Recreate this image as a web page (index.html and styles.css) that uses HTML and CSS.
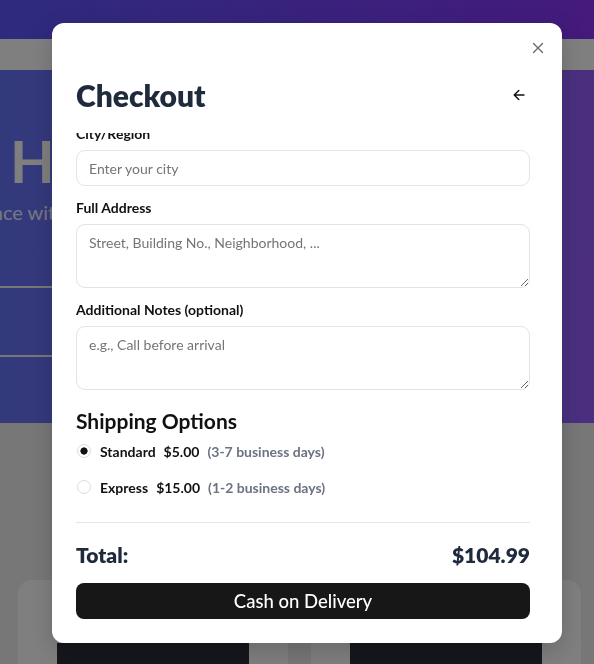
FILE: index.html
```html
<!DOCTYPE html>
<html lang="en">
<head>
<meta charset="utf-8">
<title>Checkout</title>
<link rel="stylesheet" href="styles.css">
</head>
<body>
<header class="topbar"></header>
<div class="subbar"></div>
<section class="hero">
  <h1 class="hero-title">Handmade Market</h1>
  <p class="hero-sub">experience with our store</p>
  <div class="hero-search"></div>
</section>
<section class="products">
  <div class="card"><div class="thumb"></div></div>
  <div class="card"><div class="thumb"></div></div>
</section>

<div class="overlay"></div>

<div class="modal" role="dialog" aria-label="Checkout">
  <button class="close" aria-label="Close">
    <svg width="12" height="12" viewBox="0 0 12 12"><path d="M1.5 1.5l9 9M10.5 1.5l-9 9" stroke="#6b6b6b" stroke-width="1.4" fill="none" stroke-linecap="round"/></svg>
  </button>
  <div class="modal-head">
    <h2 class="modal-title">Checkout</h2>
    <button class="back" aria-label="Back">
      <svg width="12" height="12" viewBox="0 0 12 12"><path d="M11 6H1.2M5.8 1.4L1.2 6l4.6 4.6" stroke="#111" stroke-width="1.4" fill="none" stroke-linecap="round" stroke-linejoin="round"/></svg>
    </button>
  </div>
  <div class="modal-body">
    <form class="form">
      <div class="field">
        <label class="label">City/Region</label>
        <input class="input" type="text" placeholder="Enter your city">
      </div>
      <div class="field">
        <label class="label">Full Address</label>
        <textarea class="input textarea" placeholder="Street, Building No., Neighborhood, ..."></textarea>
      </div>
      <div class="field">
        <label class="label">Additional Notes (optional)</label>
        <textarea class="input textarea" placeholder="e.g., Call before arrival"></textarea>
      </div>
      <h3 class="section-title">Shipping Options</h3>
      <div class="options">
        <label class="option">
          <input class="radio" type="radio" name="ship" checked>
          <span class="opt-name">Standard</span>
          <span class="opt-price">$5.00</span>
          <span class="opt-time">(3-7 business days)</span>
        </label>
        <label class="option">
          <input class="radio" type="radio" name="ship">
          <span class="opt-name">Express</span>
          <span class="opt-price">$15.00</span>
          <span class="opt-time">(1-2 business days)</span>
        </label>
      </div>
      <div class="summary">
        <div class="total">
          <span>Total:</span>
          <span>$104.99</span>
        </div>
        <button type="button" class="pay">Cash on Delivery</button>
      </div>
    </form>
  </div>
</div>
</body>
</html>
```

FILE: styles.css
```css
* { box-sizing: border-box; }
html, body { margin: 0; padding: 0; }
body {
  font-family: Lato, "Noto Sans", sans-serif;
  background: #eeeeee;
  width: 594px;
  height: 664px;
  overflow: hidden;
}

.topbar {
  height: 39px;
  background: linear-gradient(90deg, #2e2b7d, #441a7c);
}
.subbar { height: 31px; background: #fff; }

.hero {
  height: 353px;
  background: linear-gradient(90deg, #6674f8, #985eff);
  padding: 56px 0 0 10px;
  overflow: hidden;
}
.hero-title {
  margin: 0;
  font-size: 58px;
  font-weight: 700;
  line-height: 1.2;
  color: #fff;
  white-space: nowrap;
}
.hero-sub {
  margin: 2px 0 0 -83px;
  font-size: 20px;
  line-height: 28px;
  color: rgba(255,255,255,0.9);
  white-space: nowrap;
}
.hero-search {
  margin: 60px 0 0 -30px;
  width: 420px;
  height: 71px;
  border-top: 2px solid #eeeeee;
  border-bottom: 2px solid #eeeeee;
}

.products {
  display: flex;
  gap: 23px;
  padding: 157px 0 0 18px;
}
.card {
  width: 270px;
  height: 84px;
  background: #fff;
  border-radius: 14px 14px 0 0;
  display: flex;
  justify-content: center;
  padding-top: 63px;
  flex: none;
}
.thumb { width: 192px; height: 21px; background: #2c2e38; }

.overlay {
  position: fixed;
  left: 0; right: 0; top: 39px; bottom: 0;
  background: rgba(0,0,0,0.5);
}

.modal {
  position: fixed;
  top: 23px;
  left: 52px;
  width: 510px;
  height: 620px;
  background: #fff;
  border-radius: 12px;
  padding: 54px 32px 24px 24px;
  display: flex;
  flex-direction: column;
  box-shadow: 0 8px 24px rgba(0,0,0,0.18);
}
.close {
  position: absolute;
  top: 19px;
  right: 18px;
  width: 12px;
  height: 12px;
  padding: 0;
  border: 0;
  background: none;
  display: flex;
}
.modal-head {
  display: flex;
  align-items: center;
  justify-content: space-between;
  height: 36px;
  flex: none;
}
.modal-title {
  margin: 0;
  font-size: 30px;
  line-height: 36px;
  font-weight: 800;
  color: #1f2a3c;
}
.back {
  border: 0;
  background: none;
  padding: 0;
  margin-right: 5px;
  display: flex;
}

.modal-body {
  flex: 1;
  overflow: hidden;
  margin-top: 20px;
}
.form {
  margin-top: -9px;
  display: flex;
  flex-direction: column;
}
.field {
  display: flex;
  flex-direction: column;
  gap: 6px;
  margin-bottom: 12px;
}
.label {
  font-size: 14px;
  line-height: 20px;
  font-weight: 700;
  color: #111;
}
.input {
  height: 36px;
  border: 1px solid #e3e3e3;
  border-radius: 9px;
  padding: 0 12px;
  font-family: Lato, "Noto Sans", sans-serif;
  font-size: 14px;
  color: #111;
  background: #fff;
  outline: none;
}
.input::placeholder { color: #757575; }
.textarea {
  height: 64px;
  padding: 8px 12px;
  line-height: 20px;
  resize: vertical;
}

.section-title {
  margin: 5px 0 0;
  font-size: 21px;
  line-height: 28px;
  font-weight: 700;
  color: #111;
}
.options {
  display: flex;
  flex-direction: column;
  gap: 12px;
  margin-top: 4px;
}
.option {
  display: flex;
  align-items: center;
  height: 24px;
  font-size: 14px;
  font-weight: 700;
  color: #111;
}
.radio {
  appearance: none;
  -webkit-appearance: none;
  width: 14px;
  height: 14px;
  margin: 0 9px 0 1px;
  border: 1px solid #dcdcdc;
  border-radius: 50%;
  background: #fff;
}
.radio:checked {
  background: radial-gradient(circle, #111 0 3.3px, #fff 3.9px);
}
.opt-price { margin-left: 8px; }
.opt-time { margin-left: 8px; color: #6b7280; }

.summary {
  margin-top: 23px;
  border-top: 1px solid #e5e5e5;
  padding-top: 18px;
}
.total {
  display: flex;
  justify-content: space-between;
  font-size: 21px;
  line-height: 28px;
  font-weight: 800;
  color: #1f2a3c;
}
.pay {
  margin-top: 14px;
  width: 100%;
  height: 36px;
  border: 0;
  border-radius: 8px;
  background: #171717;
  color: #fff;
  font-family: Lato, "Noto Sans", sans-serif;
  font-size: 18.5px;
  font-weight: 500;
}
```
